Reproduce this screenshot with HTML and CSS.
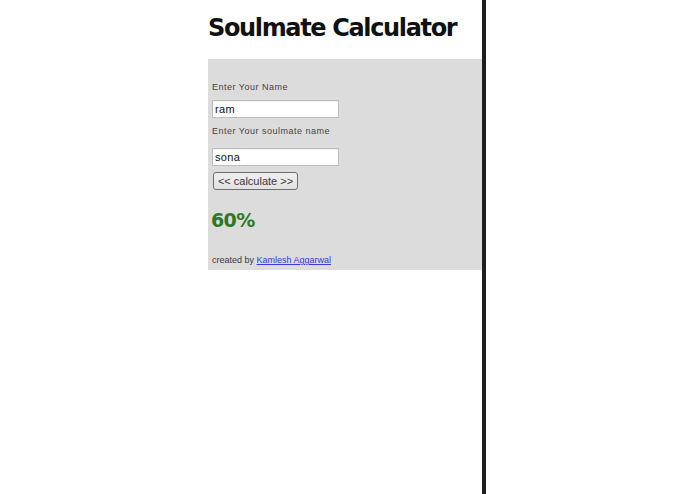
FILE: index.html
```html
<!DOCTYPE html>
<html>
<head>
<meta charset="utf-8">
<title>Soulmate Calculator</title>
<link rel="stylesheet" href="styles.css">
</head>
<body>
<div class="page">
  <h1 class="title">Soulmate Calculator</h1>
  <form class="panel">
    <label class="label" for="n1">Enter Your Name</label>
    <input class="field" id="n1" type="text" value="ram">
    <label class="label label-second" for="n2">Enter Your soulmate name</label>
    <input class="field" id="n2" type="text" value="sona">
    <button class="btn" type="button">&lt;&lt; calculate &gt;&gt;</button>
    <div class="result">60%</div>
    <div class="credit">created by <a href="#" class="author">Kamlesh Aggarwal</a></div>
  </form>
</div>
</body>
</html>
```
FILE: styles.css
```css
html, body {
  margin: 0;
  padding: 0;
  background: #ffffff;
  height: 100%;
}
.page {
  margin-left: 208px;
  width: 274px;
  height: 494px;
  border-right: 4px solid #1e1e1e;
  display: flex;
  flex-direction: column;
  font-family: "Liberation Sans", Arial, sans-serif;
}
.title {
  margin: 0;
  height: 59px;
  flex: none;
  box-sizing: border-box;
  padding-top: 14px;
  font-family: "DejaVu Sans", sans-serif;
  font-size: 24px;
  font-weight: bold;
  letter-spacing: -1.35px;
  color: #111;
  line-height: 28px;
  white-space: nowrap;
}
.panel {
  background: #dcdcdc;
  margin: 0;
  padding: 22px 0 0 4px;
  display: flex;
  flex-direction: column;
  align-items: flex-start;
  height: 211px;
  flex: none;
  box-sizing: border-box;
}
.label {
  font-size: 9px;
  letter-spacing: 0.5px;
  color: #444;
  line-height: 12px;
}
.field {
  margin: 7px 0 7px 0;
  width: 127px;
  height: 18px;
  box-sizing: border-box;
  border: 1px solid #bdbdbd;
  box-shadow: inset 0 1px 1px rgba(0,0,0,0.06);
  background: #fff;
  font-family: "Liberation Sans", Arial, sans-serif;
  font-size: 11px;
  letter-spacing: 0.3px;
  padding: 0 2px;
  color: #111;
}
.label-second + .field {
  margin-top: 11px;
  margin-bottom: 6px;
}
.btn {
  margin: 0 0 0 1px;
  width: 85px;
  height: 18px;
  padding: 0;
  border: 1px solid #6e6e6e;
  border-radius: 3px;
  background: linear-gradient(#f0f0f0, #e2e2e2);
  font-family: "Liberation Sans", Arial, sans-serif;
  font-size: 11px;
  color: #3a3a3a;
}
.result {
  margin-top: 18px;
  margin-left: -1px;
  font-family: "DejaVu Sans", sans-serif;
  font-size: 19px;
  font-weight: bold;
  letter-spacing: -0.6px;
  color: #2b7a22;
  line-height: 24px;
}
.credit {
  margin-top: 22px;
  font-size: 9px;
  color: #3a3a3a;
  line-height: 12px;
}
.author {
  color: #3a3adb;
  text-decoration: underline;
}
```
